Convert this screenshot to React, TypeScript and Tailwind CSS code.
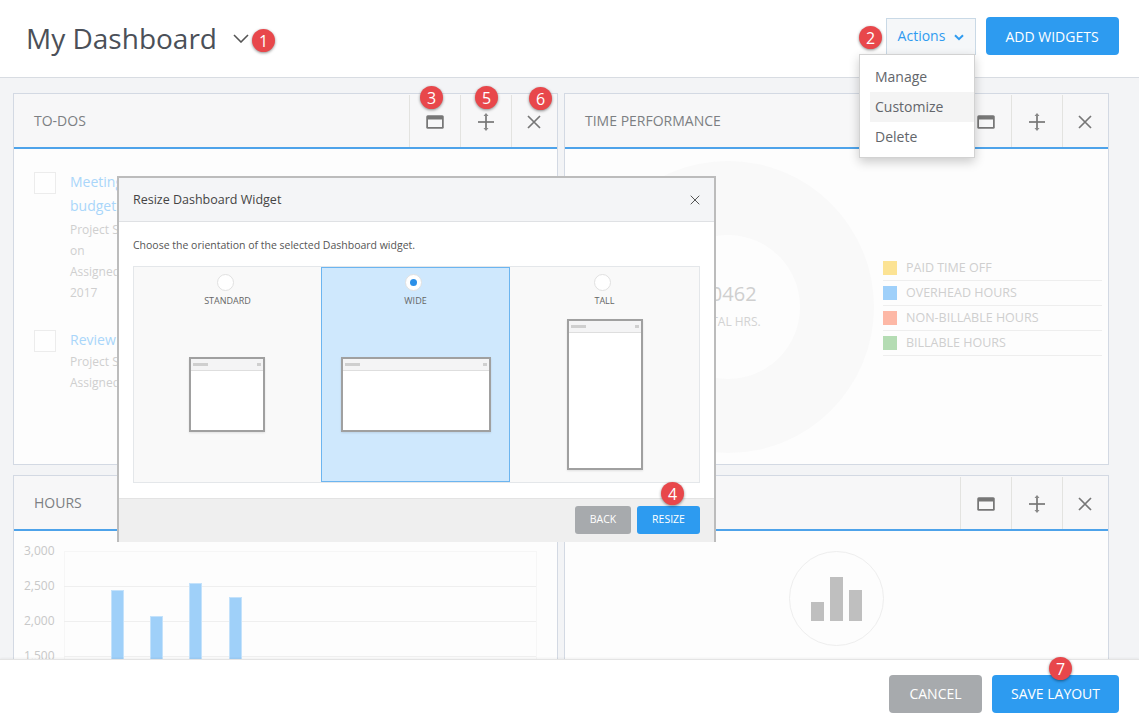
import React from "react";

function Badge({ n, className }: { n: number; className: string }) {
  return (
    <div className={`absolute z-40 flex h-[23px] w-[23px] items-center justify-center rounded-full bg-[#e8474b] text-[16px] leading-none text-white shadow-[0_1px_3px_rgba(0,0,0,0.45)] ${className}`}>
      {n}
    </div>
  );
}

function WindowIcon() {
  return (
    <svg width="18" height="14" viewBox="0 0 18 14">
      <rect x="0.25" y="0.25" width="17.5" height="13.5" rx="1.5" fill="#777" />
      <rect x="2" y="4.5" width="14" height="7.5" fill="#f7f7f8" />
    </svg>
  );
}

function MoveIcon() {
  return (
    <svg width="16" height="18" viewBox="0 0 16 18" fill="none">
      <path d="M0 9H16" stroke="#777" strokeWidth="1.7" />
      <path d="M8 2V16" stroke="#777" strokeWidth="1.7" />
      <path d="M8 0L10.5 3H5.5Z M8 18L10.5 15H5.5Z" fill="#888" />
    </svg>
  );
}

function CloseIcon({ size = 14, color = "#777", w = 1.7 }: { size?: number; color?: string; w?: number }) {
  return (
    <svg width={size} height={size} viewBox="0 0 14 14" fill="none">
      <path d="M1 1L13 13M13 1L1 13" stroke={color} strokeWidth={w} />
    </svg>
  );
}

function Widget({ title, children }: { title: string; children?: React.ReactNode }) {
  return (
    <section className="flex h-[372px] flex-col overflow-hidden border border-[#d3d9e3] bg-[#fdfdfd]">
      <div className="flex h-[53px] shrink-0 items-stretch justify-between border-b-2 border-[#4ea3ea] bg-[#f7f7f8] box-content">
        <h2 className="self-center pl-5 text-[14px] font-medium text-[#7c7f83]">{title}</h2>
        <div className="flex pt-px">
          <div className="flex w-[51px] items-center justify-center border-l border-[#e3e3e0] pt-[2px]"><WindowIcon /></div>
          <div className="flex w-[51px] items-center justify-center border-l border-[#e3e3e0] pt-[2px]"><MoveIcon /></div>
          <div className="flex w-[46px] items-center justify-center border-l border-[#e3e3e0] pr-px pt-[2px]"><CloseIcon /></div>
        </div>
      </div>
      <div className="min-h-0 flex-1">{children}</div>
    </section>
  );
}

function Todo({ lines, meta }: { lines: [string, string][]; meta: string[] }) {
  return (
    <div className="flex gap-[14px]">
      <div className="h-[22px] w-[22px] shrink-0 border border-[#ececec] bg-[#fefefe]" />
      <div>
        {lines.map(([l, h]) => (
          <div key={l} className={`${h} text-[14px] leading-[20px] text-[#a9d6fa]`}>{l}</div>
        ))}
        {meta.map((l) => (
          <div key={l} className="h-[21px] text-[12px] leading-[21px] text-[#cfcfcf]">{l}</div>
        ))}
      </div>
    </div>
  );
}

const legend = [
  ["PAID TIME OFF", "bg-[#fce394]"],
  ["OVERHEAD HOURS", "bg-[#9fd0fa]"],
  ["NON-BILLABLE HOURS", "bg-[#fdb8a6]"],
  ["BILLABLE HOURS", "bg-[#b4dcb3]"],
];

function LayoutOption({ label, selected, children }: { label: string; selected?: boolean; children: React.ReactNode }) {
  return (
    <div className={`flex flex-col items-center ${selected ? "border border-[#6cb5f0] bg-[#cfe8fd] pt-[6px]" : "pt-[7px]"}`}>
      <div className="mr-[5px] flex h-[17px] w-[17px] items-center justify-center rounded-full border border-[#e1e1e1] bg-white">
        {selected && <div className="h-[7px] w-[7px] rounded-full bg-[#2a8fe8]" />}
      </div>
      <div className="mt-[2px] h-[15px] text-[9px] leading-[15px] text-[#666]">{label}</div>
      {children}
    </div>
  );
}

function Preview({ className }: { className: string }) {
  return (
    <div className={`flex flex-col border-2 border-[#a0a0a0] bg-white shadow-[0_1px_2px_rgba(0,0,0,0.1)] ${className}`}>
      <div className="flex h-[12px] shrink-0 items-center justify-between border-b border-[#dedede] bg-[#f4f4f5] px-[2px]">
        <div className="h-[3px] w-[15px] bg-[#cfcfcf]" />
        <div className="h-[3px] w-[4px] bg-[#cfcfcf]" />
      </div>
    </div>
  );
}

export default function App() {
  return (
    <div className="relative flex h-[728px] w-[1139px] flex-col overflow-hidden bg-white font-['Open_Sans',sans-serif]">
      <header className="flex h-[78px] shrink-0 items-start justify-between border-b border-[#d8dce2] bg-white pl-[26px] pr-5">
        <div className="flex items-center gap-4 pt-[16px]">
          <h1 className="text-[28px] leading-[44px] text-[#4b5058]">My Dashboard</h1>
          <svg width="16" height="9" viewBox="0 0 16 9" fill="none">
            <path d="M1 1L8 8L15 1" stroke="#555" strokeWidth="1.6" />
          </svg>
        </div>
        <div className="flex items-start gap-[10px] pt-[17px]">
          <button className="mt-px flex h-[37px] w-[90px] items-center justify-center gap-[9px] border border-[#c9d9e6] bg-[#f5f7f9] pb-[2px] text-[14px] text-[#2f9bf0]">
            Actions
            <svg className="mt-[3px]" width="10" height="7" viewBox="0 0 10 7" fill="none">
              <path d="M1 1.2L5 5.2L9 1.2" stroke="#2f9bf0" strokeWidth="2" />
            </svg>
          </button>
          <button className="h-[38px] w-[133px] rounded-[4px] bg-[#2d9bf0] pr-px text-[14px] font-medium text-white">ADD WIDGETS</button>
        </div>
      </header>

      <main className="min-h-0 flex-1 overflow-hidden bg-[#f3f4f6] pl-[13px] pt-[15px]">
        <div className="grid grid-cols-[545px_545px] gap-x-[6px] gap-y-[10px]">
          <Widget title="TO-DOS">
            <div className="flex flex-col gap-[27px] pl-5 pt-[23px]">
              <Todo lines={[["Meeting to discuss", "h-[24px]"], ["budget", "h-[23px]"]]} meta={["Project Status", "on", "Assigned to me", "2017"]} />
              <Todo lines={[["Review schedule", "h-[21px]"]]} meta={["Project Status", "Assigned to me"]} />
            </div>
          </Widget>
          <Widget title="TIME PERFORMANCE">
            <div className="flex items-center gap-[9px] pl-[17px] pt-3">
              <div className="flex h-[292px] w-[292px] shrink-0 items-center justify-center rounded-full bg-[#f9f9f9]">
                <div className="flex h-[144px] w-[144px] flex-col items-center justify-center rounded-full bg-[#fdfdfd] pb-1">
                  <div className="text-[20px] leading-[28px] text-[#cfcfcf]">10462</div>
                  <div className="mt-[6px] text-[12px] leading-4 text-[#d3d3d3]">TOTAL HRS.</div>
                </div>
              </div>
              <ul className="-mt-[2px] w-[219px]">
                {legend.map(([label, color]) => (
                  <li key={label} className="flex h-[25px] items-center gap-[9px] border-b border-[#eeeeee]">
                    <div className={`h-[14px] w-[14px] ${color}`} />
                    <span className="text-[12.5px] text-[#cfcfcf]">{label}</span>
                  </li>
                ))}
              </ul>
            </div>
          </Widget>
          <Widget title="HOURS">
            <svg width="543" height="130" viewBox="0 0 543 130" className="block">
              <rect x="50.5" y="20.5" width="472" height="120" fill="#fdfdfd" stroke="#f6f6f6" />
              <path d="M50 55.5H522M50 90.5H522M50 125.5H522" stroke="#efefef" />
              {[
                ["3,000", 24],
                ["2,500", 59],
                ["2,000", 94],
                ["1,500", 129],
              ].map(([t, y]) => (
                <text key={t} x="10" y={y} fontSize="12" fill="#c8c8c8" fontFamily="Open Sans">{t}</text>
              ))}
              {[
                [97, 59],
                [136, 85],
                [175, 52],
                [215, 66],
              ].map(([x, y]) => (
                <rect key={x} x={Number(x) + 0.5} y={Number(y) + 0.5} width="12" height="140" fill="#9fd0f9" stroke="#c4e2fb" />
              ))}
            </svg>
          </Widget>
          <Widget title="">
            <div className="flex justify-center pt-5">
              <div className="flex h-[95px] w-[95px] items-end justify-center gap-[6px] rounded-full border border-[#eeeeee] pb-6">
                <div className="h-[19px] w-[13px] bg-[#bfbfbf]" />
                <div className="h-[44px] w-[13px] bg-[#bfbfbf]" />
                <div className="h-[31px] w-[13px] bg-[#bfbfbf]" />
              </div>
            </div>
          </Widget>
        </div>
      </main>

      <footer className="z-10 flex h-[69px] shrink-0 items-center justify-end gap-[10px] border-t border-[#e4e4e4] bg-white pb-px pr-5 shadow-[0_-1px_2px_rgba(0,0,0,0.05)]">
        <button className="h-[38px] w-[93px] rounded-[4px] bg-[#a7aaad] text-[14px] font-medium text-white">CANCEL</button>
        <button className="h-[38px] w-[127px] rounded-[4px] bg-[#2d9bf0] text-[14px] font-medium text-white">SAVE LAYOUT</button>
      </footer>

      {/* Actions dropdown */}
      <div className="absolute left-[859px] top-[54px] z-30 h-[104px] w-[116px] border border-[#d2d2d2] bg-white pl-[10px] pt-[7px] shadow-[0_4px_10px_rgba(0,0,0,0.2)]">
        {["Manage", "Customize", "Delete"].map((m) => (
          <div key={m} className={`flex h-[30px] items-center pb-[2px] pl-[5px] text-[14px] text-[#63666b] ${m === "Customize" ? "bg-[#f4f4f4]" : ""}`}>{m}</div>
        ))}
      </div>

      {/* Resize modal */}
      <div className="absolute left-[117px] top-[176px] z-20 flex h-[366px] w-[599px] flex-col border-x-2 border-t-2 border-[#bcbcbc] bg-white">
        <div className="flex h-[44px] shrink-0 items-center justify-between border-b border-[#dfe1e4] bg-[#f4f5f7] pl-[14px] pr-[14px] pt-px">
          <span className="text-[12.5px] text-[#444]">Resize Dashboard Widget</span>
          <CloseIcon size={10} color="#555" w={1.4} />
        </div>
        <div className="flex-1 px-[14px]">
          <p className="pt-[15px] text-[10.5px] leading-[16px] text-[#555]">Choose the orientation of the selected Dashboard widget.</p>
          <div className="mt-[13px] grid h-[217px] grid-cols-[187px_189px_189px] border border-[#e4e7ea] bg-[#f9f9f9]">
            <LayoutOption label="STANDARD">
              <Preview className="mr-px mt-[49px] h-[75px] w-[76px]" />
            </LayoutOption>
            <LayoutOption label="WIDE" selected>
              <Preview className="mt-[49px] h-[75px] w-[150px]" />
            </LayoutOption>
            <LayoutOption label="TALL">
              <Preview className="mt-[11px] h-[151px] w-[76px]" />
            </LayoutOption>
          </div>
        </div>
        <div className="flex h-[44px] shrink-0 items-start justify-end gap-[6px] border-t border-[#e3e3e3] bg-[#efefef] pr-[14px] pt-[7px]">
          <button className="h-[28px] w-[56px] rounded-[3px] bg-[#a7aaad] text-[10.5px] font-medium text-white">BACK</button>
          <button className="h-[28px] w-[63px] rounded-[3px] bg-[#2d9bf0] text-[10.5px] font-medium text-white">RESIZE</button>
        </div>
      </div>

      <Badge n={1} className="left-[252px] top-[29px]" />
      <Badge n={2} className="left-[859px] top-[26px]" />
      <Badge n={3} className="left-[420px] top-[86px]" />
      <Badge n={4} className="left-[661px] top-[482px]" />
      <Badge n={5} className="left-[475px] top-[86px]" />
      <Badge n={6} className="left-[529px] top-[87px]" />
      <Badge n={7} className="left-[1049px] top-[657px]" />
    </div>
  );
}
